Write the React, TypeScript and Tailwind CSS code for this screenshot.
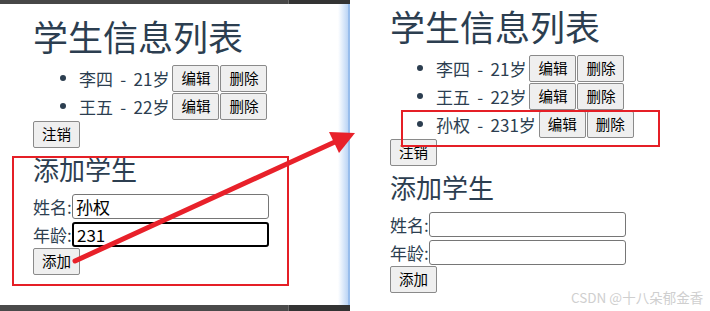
import React from "react";

const font = { fontFamily: '"Noto Sans CJK SC", "Noto Sans", sans-serif' };

function Btn({ children, className = "" }: { children: React.ReactNode; className?: string }) {
  return (
    <button
      className={`h-[27px] px-[8px] text-[14.5px] leading-none text-black bg-[#efefef] border border-[#8a8a8a] rounded-[2px] ${className}`}
      style={font}
    >
      {children}
    </button>
  );
}

function Item({ text }: { text: string }) {
  return (
    <div className="h-[28px] flex items-center">
      <span className="w-[6px] h-[6px] rounded-full bg-[#2c3e50] ml-[27px] mr-[13px]" />
      <span className="text-[17px] leading-none text-[#2c3e50] mr-[3px] [word-spacing:3.5px]">{text}</span>
      <div className="flex gap-[1px]">
        <Btn>编辑</Btn>
        <Btn>删除</Btn>
      </div>
    </div>
  );
}

function Field({ label, value, focused }: { label: string; value: string; focused?: boolean }) {
  return (
    <div className="h-[28px] flex items-center">
      <span className="text-[17px] leading-none text-[#2c3e50] w-[39px]">{label}</span>
      <div
        className={`w-[197px] h-[25px] rounded-[3px] bg-white flex items-center px-[3px] text-[17px] leading-none text-black ${
          focused ? "border-2 border-black" : "border border-[#767676]"
        }`}
      >
        {value}
      </div>
    </div>
  );
}

function Page({ items, name, age, focused }: { items: string[]; name: string; age: string; focused?: boolean }) {
  return (
    <div className="flex flex-col items-start">
      <div className="h-[40px] text-[35px] leading-[40px] text-[#2c3e50]">学生信息列表</div>
      <div className="mt-[8px] flex flex-col">
        {items.map((t) => (
          <Item key={t} text={t} />
        ))}
      </div>
      <Btn className="mt-[1px]">注销</Btn>
      <div className="mt-[6px] h-[30px] text-[26px] leading-[30px] text-[#2c3e50]">添加学生</div>
      <div className="mt-[8px] flex flex-col">
        <Field label="姓名:" value={name} />
        <Field label="年龄:" value={age} focused={focused} />
      </div>
      <Btn className="mt-[0px]">添加</Btn>
    </div>
  );
}

export default function App() {
  return (
    <div className="relative w-[710px] h-[311px] bg-white overflow-hidden flex" style={font}>
      {/* left screenshot */}
      <div className="w-[350px] h-full flex flex-col">
        <div className="h-[4px] flex bg-[#3a3a3a]">
          <div className="w-[288px] bg-[#474747]" />
          <div className="w-[1px] bg-[#6a6a6a]" />
          <div className="flex-1 bg-[#333333]" />
        </div>
        <div className="flex-1 flex">
          <div className="flex-1 pl-[33px] pt-[12px]">
            <Page items={["李四 - 21岁", "王五 - 22岁"]} name="孙权" age="231" focused />
          </div>
          <div className="w-[12px] bg-gradient-to-r from-white to-[#bcd5f5] border-r-2 border-[#98bdec]" />
        </div>
        <div className="h-[6px] flex">
          <div className="w-[288px] bg-[#4a4a4a]" />
          <div className="w-[1px] bg-[#6a6a6a]" />
          <div className="flex-1 bg-[#333333]" />
        </div>
      </div>

      {/* right screenshot */}
      <div className="flex-1 pl-[40px] pt-[6px]">
        <Page items={["李四 - 21岁", "王五 - 22岁", "孙权 - 231岁"]} name="" age="" />
      </div>

      {/* annotations */}
      <div className="absolute left-[12px] top-[156px] w-[277px] h-[130px] border-2 border-[#e51f26]" />
      <div className="absolute left-[401px] top-[110px] w-[259px] h-[37px] border-2 border-[#e51f26]" />
      <svg className="absolute left-0 top-0" width="710" height="311" viewBox="0 0 710 311">
        <line x1="75" y1="261" x2="337" y2="141" stroke="#e8212a" strokeWidth="5" strokeLinecap="round" />
        <polygon points="355,133 329,132 339,153" fill="#e8212a" />
      </svg>
      <div className="absolute left-[571px] top-[289px] text-[13.5px] leading-[16px] text-[#cfcfcf]">
        CSDN @十八朵郁金香
      </div>
    </div>
  );
}
